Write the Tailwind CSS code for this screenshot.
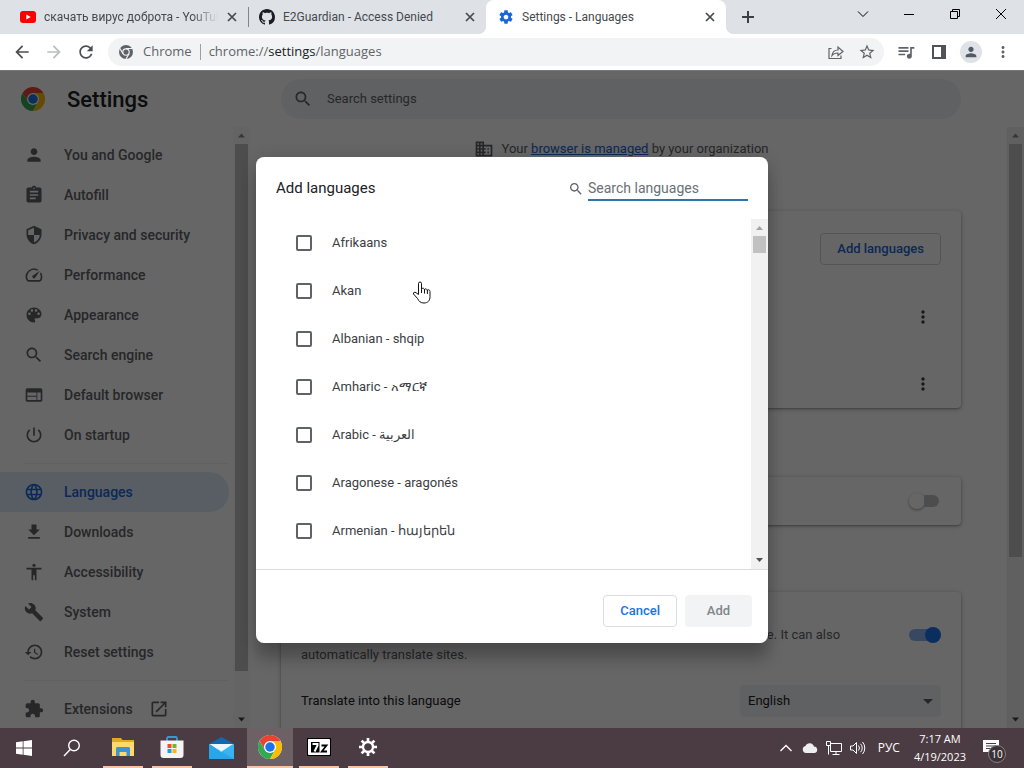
<!DOCTYPE html>
<html lang="en">
<head>
    <meta charset="UTF-8">
    <meta name="viewport" content="width=device-width, initial-scale=1.0">
    <title>Settings - Languages</title>
    <script src="https://cdn.jsdelivr.net/npm/@tailwindcss/browser@4"></script>
</head>
<body class="h-screen flex flex-col overflow-hidden bg-white font-['Roboto',sans-serif] text-[13px] text-[#202124]">
    <!-- Shared icons -->
    <svg class="hidden">
        <symbol id="i-close" viewBox="0 0 10 10"><path d="M1 1l8 8M9 1L1 9" fill="none" stroke="currentColor" stroke-width="1.7"/></symbol>
        <symbol id="i-search" viewBox="0 0 24 24"><path d="M15.5 14h-.79l-.28-.27C15.41 12.59 16 11.11 16 9.5 16 5.91 13.09 3 9.5 3S3 5.91 3 9.5 5.91 16 9.5 16c1.61 0 3.09-.59 4.23-1.57l.27.28v.79l5 4.99L20.49 19l-4.99-5zm-6 0C7.01 14 5 11.99 5 9.5S7.01 5 9.5 5 14 7.01 14 9.5 11.99 14 9.5 14z"/></symbol>
        <symbol id="i-person" viewBox="0 0 24 24"><path d="M12 12c2.21 0 4-1.79 4-4s-1.79-4-4-4-4 1.79-4 4 1.79 4 4 4zm0 2c-2.67 0-8 1.34-8 4v2h16v-2c0-2.66-5.33-4-8-4z"/></symbol>
        <symbol id="i-more" viewBox="0 0 24 24"><path d="M12 8c1.1 0 2-.9 2-2s-.9-2-2-2-2 .9-2 2 .9 2 2 2zm0 2c-1.1 0-2 .9-2 2s.9 2 2 2 2-.9 2-2-.9-2-2-2zm0 6c-1.1 0-2 .9-2 2s.9 2 2 2 2-.9 2-2-.9-2-2-2z"/></symbol>
        <symbol id="i-gear" viewBox="0 0 24 24"><path d="M19.43 12.98c.04-.32.07-.64.07-.98s-.03-.66-.07-.98l2.11-1.65c.19-.15.24-.42.12-.64l-2-3.46c-.12-.22-.39-.3-.61-.22l-2.49 1c-.52-.4-1.08-.73-1.69-.98l-.38-2.65C14.46 2.18 14.25 2 14 2h-4c-.25 0-.46.18-.49.42l-.38 2.65c-.61.25-1.17.59-1.69.98l-2.49-1c-.23-.09-.49 0-.61.22l-2 3.46c-.13.22-.07.49.12.64l2.11 1.65c-.04.32-.07.65-.07.98s.03.66.07.98l-2.11 1.65c-.19.15-.24.42-.12.64l2 3.46c.12.22.39.3.61.22l2.49-1c.52.4 1.08.73 1.69.98l.38 2.65c.03.24.24.42.49.42h4c.25 0 .46-.18.49-.42l.38-2.65c.61-.25 1.17-.59 1.69-.98l2.49 1c.23.09.49 0 .61-.22l2-3.46c.12-.22.07-.49-.12-.64l-2.11-1.65zM12 15.5c-1.93 0-3.5-1.57-3.5-3.5s1.57-3.5 3.5-3.5 3.5 1.57 3.5 3.5-1.57 3.5-3.5 3.5z"/></symbol>
        <symbol id="i-chrome" viewBox="0 0 48 48">
            <circle cx="24" cy="24" r="24" fill="#fff"/>
            <path fill="#ea4335" d="M24 12h20.8A24 24 0 0 0 3.2 12l10.4 18z"/>
            <path fill="#34a853" d="M34.4 30L24 48A24 24 0 0 1 3.2 12l10.4 18z"/>
            <path fill="#fbbc04" d="M34.4 30L24 48A24 24 0 0 0 44.8 12H24z"/>
            <circle cx="24" cy="24" r="12" fill="#fff"/>
            <circle cx="24" cy="24" r="9.5" fill="#1a73e8"/>
        </symbol>
    </svg>

    <!-- Tab strip -->
    <div class="h-[34px] shrink-0 flex bg-[#dee1e6] pl-2 text-[12px] text-[#45494d]">
        <div class="w-60 flex items-center pl-3 pr-2">
            <svg class="w-4 h-4 shrink-0" viewBox="0 0 16 16"><rect y="2" width="16" height="12" rx="3" fill="#f00"/><path d="M6.3 5.5v5L10.700 8z" fill="#fff"/></svg>
            <span class="ml-2 flex-1 min-w-0 overflow-hidden whitespace-nowrap [mask-image:linear-gradient(to_right,black_85%,transparent)]">скачать вирус доброта - YouTube</span>
            <button class="ml-1.5 p-[3px]" aria-label="Close tab"><svg class="w-[10px] h-[10px]"><use href="#i-close"/></svg></button>
        </div>
        <div class="w-[238px] flex items-center pr-2">
            <span class="w-px h-5 bg-[#80868b]"></span>
            <svg class="ml-2.5 w-4 h-4 shrink-0" viewBox="0 0 16 16" fill="#1b1f23"><path d="M8 0C3.58 0 0 3.58 0 8c0 3.54 2.29 6.53 5.47 7.59.4.07.55-.17.55-.38 0-.19-.01-.82-.01-1.49-2.01.37-2.53-.49-2.690-.94-.09-.23-.48-.94-.82-1.13-.28-.15-.68-.52-.01-.53.63-.01 1.08.58 1.23.82.72 1.21 1.87.87 2.330.66.07-.52.28-.87.51-1.07-1.78-.2-3.64-.89-3.64-3.95 0-.87.31-1.59.82-2.15-.08-.2-.36-1.02.08-2.12 0 0 .67-.21 2.2.82.64-.18 1.32-.27 2-.27s1.36.09 2 .27c1.530-1.04 2.200-.82 2.200-.82.44 1.100.160 1.920.080 2.120.510.560.820 1.270.820 2.150 0 3.070-1.870 3.750-3.650 3.950.290.250.540.730.540 1.480 0 1.070-.010 1.930-.010 2.200 0 .210.150.460.550.380A8.010 8.010 0 0 0 16 8c0-4.420-3.580-8-8-8z"/></svg>
            <span class="ml-2 flex-1 min-w-0 overflow-hidden whitespace-nowrap">E2Guardian - Access Denied</span>
            <button class="ml-2 p-[3px]" aria-label="Close tab"><svg class="w-[10px] h-[10px]"><use href="#i-close"/></svg></button>
        </div>
        <div class="relative w-60 flex items-center pl-3 pr-2 bg-white rounded-t-lg">
            <span class="absolute -left-2 bottom-0 w-2 h-2 bg-[radial-gradient(circle_at_top_left,transparent_8px,white_8px)]"></span>
            <span class="absolute -right-2 bottom-0 w-2 h-2 bg-[radial-gradient(circle_at_top_right,transparent_8px,white_8px)]"></span>
            <svg class="w-4 h-4 shrink-0 fill-[#1a66d8]"><use href="#i-gear"/></svg>
            <span class="ml-2 flex-1 min-w-0 overflow-hidden whitespace-nowrap">Settings - Languages</span>
            <button class="ml-2 p-[3px]" aria-label="Close tab"><svg class="w-[10px] h-[10px]"><use href="#i-close"/></svg></button>
        </div>
        <button class="ml-4 self-center" aria-label="New tab"><svg class="w-3 h-3" viewBox="0 0 12 12"><path d="M6 0v12M0 6h12" stroke="#3c4043" stroke-width="2"/></svg></button>
        <div class="ml-auto flex text-black">
            <button class="w-[46px] h-7 grid place-items-center" aria-label="Search tabs"><svg class="w-3 h-3" viewBox="0 0 12 12"><path d="M1 3.500l5 5 5-5" fill="none" stroke="currentColor"/></svg></button>
            <button class="w-[46px] h-7 grid place-items-center" aria-label="Minimize"><svg class="w-3 h-3" viewBox="0 0 12 12"><path d="M1 6.500h10" stroke="currentColor"/></svg></button>
            <button class="w-[46px] h-7 grid place-items-center" aria-label="Restore"><svg class="w-3 h-3" viewBox="0 0 12 12"><path d="M1.500 3.500h7v7h-7zM3.500 3.500v-2h7v7h-2" fill="none" stroke="currentColor"/></svg></button>
            <button class="w-[46px] h-7 grid place-items-center" aria-label="Close"><svg class="w-3 h-3" viewBox="0 0 12 12"><path d="M1 1l10 10M11 1L1 11" stroke="currentColor"/></svg></button>
        </div>
    </div>

    <!-- Toolbar -->
    <div class="h-[37px] shrink-0 flex items-center pl-3 pr-3 border-b border-[#77787a] text-[#5f6368]">
        <button aria-label="Back"><svg class="w-5 h-5 fill-[#4a4d51]" viewBox="0 0 24 24"><path d="M20 11H7.83l5.590-5.590L12 4l-8 8 8 8 1.410-1.410L7.830 13H20v-2z"/></svg></button>
        <button class="ml-3" aria-label="Forward"><svg class="w-5 h-5 fill-[#bbbdbf]" viewBox="0 0 24 24"><path d="M12 4l-1.410 1.410L16.170 11H4v2h12.170l-5.580 5.590L12 20l8-8z"/></svg></button>
        <button class="ml-3" aria-label="Reload"><svg class="w-5 h-5 fill-[#4a4d51]" viewBox="0 0 24 24"><path d="M17.650 6.350C16.200 4.900 14.210 4 12 4c-4.420 0-7.990 3.580-7.990 8s3.570 8 7.990 8c3.730 0 6.840-2.550 7.730-6h-2.080c-.82 2.330-3.040 4-5.650 4-3.310 0-6-2.690-6-6s2.690-6 6-6c1.660 0 3.140.690 4.220 1.780L13 11h7V4l-2.350 2.350z"/></svg></button>
        <div class="ml-3 flex-1 h-7 flex items-center rounded-full bg-[#f1f3f4] pl-[11px] pr-2 font-['Open_Sans','Noto_Sans',sans-serif] text-[13px]">
            <svg class="w-[14px] h-[14px]" viewBox="0 0 48 48"><circle cx="24" cy="24" r="24" fill="#5f6368"/><circle cx="24" cy="24" r="11" fill="#5f6368" stroke="#f1f3f4" stroke-width="4"/><path d="M24 12h21M34.400 30L24 48M13.600 30L3.200 12" stroke="#f1f3f4" stroke-width="4"/></svg>
            <span class="ml-2.5">Chrome</span>
            <span class="mx-2 w-px h-4 bg-[#9aa0a6]"></span>
            <span class="flex-1 whitespace-nowrap">chrome://<span class="text-[#202124]">settings</span>/languages</span>
            <button aria-label="Share"><svg class="w-4 h-4" viewBox="0 0 16 16" fill="none" stroke="#5f6368" stroke-width="1.200"><path d="M3.500 4.500H1v10h12v-3M4 11.500c.5-4 3-5.500 6-5.500V3l5 4.500-5 4V9c-2.500 0-4.500.5-6 2.500z"/></svg></button>
            <button class="ml-3.5" aria-label="Bookmark"><svg class="w-[18px] h-[18px] fill-[#5f6368]" viewBox="0 0 24 24"><path d="M22 9.240l-7.190-.620L12 2 9.190 8.630 2 9.240l5.460 4.730L5.820 21 12 17.270 18.180 21l-1.630-7.030L22 9.240zM12 15.400l-3.760 2.270 1-4.280-3.320-2.880 4.380-.380L12 6.100l1.710 4.040 4.380.380-3.320 2.880 1 4.280L12 15.400z"/></svg></button>
        </div>
        <button class="ml-3" aria-label="Media control"><svg class="w-5 h-5 fill-[#5f6368]" viewBox="0 0 24 24"><path d="M15 6H3v2h12V6zm0 4H3v2h12v-2zM3 16h8v-2H3v2zM17 6v8.180c-.310-.110-.650-.180-1-.180-1.660 0-3 1.340-3 3s1.340 3 3 3 3-1.340 3-3V8h3V6h-5z"/></svg></button>
        <button class="ml-4" aria-label="Side panel"><svg class="w-[14px] h-[14px]" viewBox="0 0 14 14"><path d="M1 1h12v12H1z" fill="none" stroke="#505357" stroke-width="2"/><path d="M9 1h4v12H9z" fill="#505357"/></svg></button>
        <button class="ml-3.5 w-[22px] h-[22px] rounded-full bg-[#dfe2e7] grid place-items-center" aria-label="Profile"><svg class="w-4 h-4 fill-[#505b66]"><use href="#i-person"/></svg></button>
        <button class="ml-3" aria-label="Menu"><svg class="w-[18px] h-[18px] fill-[#5f6368]"><use href="#i-more"/></svg></button>
    </div>

    <!-- Settings page -->
    <div class="relative flex-1 min-h-0 flex flex-col">
        <header class="h-14 shrink-0 flex items-center">
            <div class="w-[281px] flex items-center pl-[21px]">
                <svg class="w-6 h-6"><use href="#i-chrome"/></svg>
                <h1 class="ml-[22px] text-[22px] font-medium">Settings</h1>
            </div>
            <label class="flex-1 max-w-[680px] h-10 flex items-center rounded-full bg-[#f1f3f4] px-3">
                <svg class="w-5 h-5 fill-[#5f6368]"><use href="#i-search"/></svg>
                <input type="text" placeholder="Search settings" class="ml-3.5 flex-1 outline-none placeholder:text-[#5f6368]">
            </label>
        </header>

        <div class="flex-1 min-h-0 flex">
            <nav class="w-[233px] shrink-0 overflow-hidden pt-2 pr-1 text-[14px] font-medium text-[#5f6368] fill-[#5f6368]">
                <a href="#" class="h-10 flex items-center pl-6"><svg class="w-5 h-5 mr-5"><use href="#i-person"/></svg>You and Google</a>
                <a href="#" class="h-10 flex items-center pl-6"><svg class="w-5 h-5 mr-5" viewBox="0 0 24 24"><path d="M19 3h-4.180C14.400 1.840 13.300 1 12 1c-1.300 0-2.400.840-2.820 2H5c-1.100 0-2 .9-2 2v14c0 1.100.9 2 2 2h14c1.100 0 2-.9 2-2V5c0-1.100-.9-2-2-2zm-7 0c.55 0 1 .45 1 1s-.45 1-1 1-1-.45-1-1 .45-1 1-1zm2 14H7v-2h7v2zm3-4H7v-2h10v2zm0-4H7V7h10v2z"/></svg>Autofill</a>
                <a href="#" class="h-10 flex items-center pl-6"><svg class="w-5 h-5 mr-5" viewBox="0 0 24 24"><path d="M12 1L3 5v6c0 5.550 3.840 10.740 9 12 5.160-1.260 9-6.450 9-12V5l-9-4zm0 10.990h7c-.53 4.120-3.280 7.790-7 8.940V12H5V6.300l7-3.110v8.800z"/></svg>Privacy and security</a>
                <a href="#" class="h-10 flex items-center pl-6"><svg class="w-5 h-5 mr-5" viewBox="0 0 24 24"><path d="M20.380 8.570l-1.230 1.850a8 8 0 0 1-.22 7.580H5.070A8 8 0 0 1 15.580 6.850l1.850-1.230A10 10 0 0 0 3.350 19a2 2 0 0 0 1.720 1h13.850a2 2 0 0 0 1.740-1 10 10 0 0 0-.27-10.440zM10.590 15.410a2 2 0 0 0 2.830 0l5.660-8.490-8.490 5.660a2 2 0 0 0 0 2.830z"/></svg>Performance</a>
                <a href="#" class="h-10 flex items-center pl-6"><svg class="w-5 h-5 mr-5" viewBox="0 0 24 24"><path d="M12 3c-4.970 0-9 4.030-9 9s4.030 9 9 9c.83 0 1.500-.67 1.500-1.500 0-.39-.15-.74-.39-1.010-.23-.26-.38-.61-.38-.99 0-.83.67-1.500 1.500-1.500H16c2.760 0 5-2.240 5-5 0-4.420-4.030-8-9-8zm-5.500 9c-.83 0-1.500-.67-1.500-1.500S5.670 9 6.500 9 8 9.670 8 10.500 7.330 12 6.500 12zm3-4C8.670 8 8 7.330 8 6.500S8.670 5 9.500 5s1.500.67 1.500 1.500S10.330 8 9.500 8zm5 0c-.83 0-1.500-.67-1.500-1.500S13.670 5 14.500 5s1.500.67 1.500 1.500S15.330 8 14.500 8zm3 4c-.83 0-1.500-.67-1.500-1.500S16.670 9 17.500 9s1.500.67 1.500 1.500-.67 1.500-1.500 1.500z"/></svg>Appearance</a>
                <a href="#" class="h-10 flex items-center pl-6"><svg class="w-5 h-5 mr-5"><use href="#i-search"/></svg>Search engine</a>
                <a href="#" class="h-10 flex items-center pl-6"><svg class="w-5 h-5 mr-5" viewBox="0 0 24 24"><path d="M20 4H4c-1.100 0-1.990.9-1.990 2L2 18c0 1.100.9 2 2 2h16c1.100 0 2-.9 2-2V6c0-1.100-.9-2-2-2zm-5 14H4v-4h11v4zm0-5H4V9h11v4zm5 5h-4V9h4v9z"/></svg>Default browser</a>
                <a href="#" class="h-10 flex items-center pl-6"><svg class="w-5 h-5 mr-5" viewBox="0 0 24 24"><path d="M13 3h-2v10h2V3zm4.830 2.170l-1.420 1.420C17.990 7.860 19 9.810 19 12c0 3.870-3.130 7-7 7s-7-3.130-7-7c0-2.190 1.010-4.140 2.580-5.420L6.170 5.170C4.230 6.820 3 9.260 3 12c0 4.970 4.030 9 9 9s9-4.030 9-9c0-2.740-1.230-5.180-3.170-6.830z"/></svg>On startup</a>
                <hr class="my-2 ml-6 border-[#f2f2f2]">
                <a href="#" class="h-10 flex items-center pl-6 rounded-r-full bg-[#dfebfb] text-[#1a66d8] fill-[#1a66d8]"><svg class="w-5 h-5 mr-5" viewBox="0 0 24 24"><path d="M11.990 2C6.470 2 2 6.480 2 12s4.470 10 9.990 10C17.520 22 22 17.520 22 12S17.520 2 11.990 2zm6.930 6h-2.950c-.32-1.250-.78-2.450-1.380-3.560 1.840.63 3.370 1.910 4.330 3.560zM12 4.040c.83 1.200 1.480 2.530 1.910 3.960h-3.820c.43-1.430 1.080-2.760 1.910-3.960zM4.260 14C4.100 13.360 4 12.690 4 12s.1-1.360.26-2h3.380c-.08.66-.14 1.320-.14 2 0 .68.06 1.340.14 2H4.260zm.82 2h2.950c.32 1.250.78 2.450 1.380 3.560-1.840-.63-3.370-1.900-4.330-3.560zm2.950-8H5.080c.96-1.660 2.490-2.930 4.330-3.560C8.810 5.550 8.350 6.750 8.030 8zM12 19.960c-.83-1.200-1.480-2.530-1.910-3.960h3.820c-.43 1.430-1.080 2.760-1.910 3.960zM14.340 14H9.660c-.09-.66-.16-1.320-.16-2 0-.68.07-1.350.16-2h4.680c.09.65.16 1.320.16 2 0 .68-.07 1.340-.16 2zm.25 5.560c.6-1.110 1.060-2.310 1.380-3.560h2.950c-.96 1.650-2.490 2.930-4.330 3.560zM16.360 14c.08-.66.14-1.320.14-2 0-.68-.06-1.340-.14-2h3.380c.16.64.26 1.310.26 2s-.1 1.360-.26 2h-3.380z"/></svg>Languages</a>
                <a href="#" class="h-10 flex items-center pl-6"><svg class="w-5 h-5 mr-5" viewBox="0 0 24 24"><path d="M19 9h-4V3H9v6H5l7 7 7-7zM5 18v2h14v-2H5z"/></svg>Downloads</a>
                <a href="#" class="h-10 flex items-center pl-6"><svg class="w-5 h-5 mr-5" viewBox="0 0 24 24"><path d="M12 2c1.100 0 2 .9 2 2s-.9 2-2 2-2-.9-2-2 .9-2 2-2zm9 7h-6v13h-2v-6h-2v6H9V9H3V7h18v2z"/></svg>Accessibility</a>
                <a href="#" class="h-10 flex items-center pl-6"><svg class="w-5 h-5 mr-5" viewBox="0 0 24 24"><path d="M22.700 19l-9.100-9.100c.9-2.300.4-5-1.500-6.900-2-2-5-2.400-7.400-1.300L9 6 6 9 1.600 4.700C.4 7.100.9 10.100 2.900 12.100c1.900 1.900 4.600 2.400 6.900 1.500l9.100 9.100c.4.4 1 .4 1.400 0l2.300-2.300c.5-.4.5-1.100.1-1.400z"/></svg>System</a>
                <a href="#" class="h-10 flex items-center pl-6"><svg class="w-5 h-5 mr-5" viewBox="0 0 24 24"><path d="M13 3c-4.970 0-9 4.030-9 9H1l3.890 3.890.07.14L9 12H6c0-3.870 3.130-7 7-7s7 3.130 7 7-3.130 7-7 7c-1.930 0-3.680-.79-4.940-2.060l-1.420 1.420C8.270 19.990 10.510 21 13 21c4.970 0 9-4.030 9-9s-4.030-9-9-9zm-1 5v5l4.280 2.540.72-1.210-3.500-2.080V8H12z"/></svg>Reset settings</a>
                <hr class="my-2 ml-6 border-[#f2f2f2]">
                <a href="#" class="h-10 flex items-center pl-6"><svg class="w-5 h-5 mr-5" viewBox="0 0 24 24"><path d="M20.500 11H19V7c0-1.100-.9-2-2-2h-4V3.500C13 2.120 11.880 1 10.500 1S8 2.120 8 3.500V5H4c-1.100 0-1.990.9-1.990 2v3.800H3.500c1.490 0 2.700 1.210 2.700 2.700s-1.210 2.700-2.700 2.700H2V20c0 1.100.9 2 2 2h3.800v-1.500c0-1.490 1.210-2.700 2.700-2.700 1.490 0 2.700 1.210 2.700 2.700V22H17c1.100 0 2-.9 2-2v-4h1.500c1.380 0 2.500-1.120 2.500-2.500S21.880 11 20.500 11z"/></svg>Extensions<svg class="w-5 h-5 ml-4" viewBox="0 0 24 24"><path d="M19 19H5V5h7V3H5c-1.110 0-2 .9-2 2v14c0 1.100.89 2 2 2h14c1.100 0 2-.9 2-2v-7h-2v7zM14 3v2h3.590l-9.830 9.830 1.410 1.410L19 6.410V10h2V3h-7z"/></svg></a>
            </nav>
            <!-- Sidebar scrollbar -->
            <div class="w-[17px] shrink-0 flex flex-col items-center bg-[#fafafa]">
                <svg class="w-[17px] h-[17px] shrink-0" viewBox="0 0 17 17"><path d="M5 10.500l3.500-4 3.500 4z" fill="#8a8a8a"/></svg>
                <div class="w-[13px] flex-1 bg-[#c1c1c1]"></div>
                <svg class="mt-10 w-[17px] h-[17px] shrink-0" viewBox="0 0 17 17"><path d="M5 6.500l3.500 4 3.500-4z" fill="#404040"/></svg>
            </div>

            <main class="flex-1 min-w-0 overflow-hidden pl-[31px] pr-[46px]">
                <p class="h-[43px] flex items-center justify-center text-[#5f6368]">
                    <svg class="w-5 h-5 mr-2 fill-[#5f6368]" viewBox="0 0 24 24"><path d="M12 7V3H2v18h20V7H12zM6 19H4v-2h2v2zm0-4H4v-2h2v2zm0-4H4V9h2v2zm0-4H4V5h2v2zm4 12H8v-2h2v2zm0-4H8v-2h2v2zm0-4H8V9h2v2zm0-4H8V5h2v2zm10 12h-8v-2h2v-2h-2v-2h2v-2h-2V9h8v10zm-2-8h-2v2h2v-2zm0 4h-2v2h2v-2z"/></svg>
                    <span>Your <a href="#" class="text-[#1a66d8] underline">browser is managed</a> by your organization</span>
                </p>
                <section class="mt-[41px] h-[197px] max-w-[680px] rounded bg-white shadow-[0_1px_2px_rgba(60,64,67,0.4),0_1px_4px_1px_rgba(60,64,67,0.2)] pt-[22px] pr-5 flex flex-col items-end">
                    <button class="h-8 px-4 rounded border border-[#d0d3d8] font-medium text-[#1a66d8]">Add languages</button>
                    <button class="mt-[42px] mr-2" aria-label="More actions"><svg class="w-5 h-5 fill-[#3c4043]"><use href="#i-more"/></svg></button>
                    <button class="mt-[47px] mr-2" aria-label="More actions"><svg class="w-5 h-5 fill-[#3c4043]"><use href="#i-more"/></svg></button>
                </section>
                <section class="mt-[69px] h-12 max-w-[680px] rounded bg-white shadow-[0_1px_2px_rgba(60,64,67,0.4),0_1px_4px_1px_rgba(60,64,67,0.2)] pr-5 flex items-center justify-end">
                    <button role="switch" aria-checked="false" aria-label="Spell check" class="w-8 h-4 flex items-center">
                        <span class="w-4 h-4 rounded-full bg-white shadow-[0_1px_3px_rgba(0,0,0,0.4)]"></span>
                        <span class="-ml-px w-[15px] h-3 rounded-r-full bg-[#bdc1c6]"></span>
                    </button>
                </section>
                <section class="mt-[67px] h-60 max-w-[680px] rounded bg-white shadow-[0_1px_2px_rgba(60,64,67,0.4),0_1px_4px_1px_rgba(60,64,67,0.2)] px-5 pt-[13px]">
                    <div class="flex items-center justify-between">
                        <div class="max-w-[560px]">
                            <p class="leading-5">Use Google Translate</p>
                            <p class="leading-5 text-[#5f6368]">When on, Google Translate will offer to translate sites into your preferred language. It can also automatically translate sites.</p>
                        </div>
                        <button role="switch" aria-checked="true" aria-label="Use Google Translate" class="w-8 h-4 flex items-center">
                            <span class="w-5 h-3 rounded-l-full bg-[#8cb4ef]"></span>
                            <span class="-ml-1 w-4 h-4 rounded-full bg-[#1a73e8]"></span>
                        </button>
                    </div>
                    <div class="mt-5 flex items-center justify-between">
                        <label for="target">Translate into this language</label>
                        <div class="relative w-[201px]">
                            <select id="target" class="appearance-none w-full h-8 rounded bg-[#f1f3f4] pl-2"><option>English</option></select>
                            <svg class="absolute right-2 top-3.5 w-[10px] h-[5px] pointer-events-none" viewBox="0 0 10 5"><path d="M0 0h10L5 5z" fill="#5f6368"/></svg>
                        </div>
                    </div>
                </section>
            </main>
            <!-- Page scrollbar -->
            <div class="w-[17px] shrink-0 flex flex-col items-center bg-[#f1f1f1]">
                <svg class="w-[17px] h-[17px] shrink-0" viewBox="0 0 17 17"><path d="M5 10.500l3.500-4 3.500 4z" fill="#8a8a8a"/></svg>
                <div class="w-[13px] flex-1 bg-[#c1c1c1]"></div>
                <svg class="mt-[154px] w-[17px] h-[17px] shrink-0" viewBox="0 0 17 17"><path d="M5 6.500l3.500 4 3.500-4z" fill="#404040"/></svg>
            </div>
        </div>

        <!-- Add languages dialog -->
        <div class="absolute inset-0 flex items-center justify-center bg-black/60">
            <div role="dialog" aria-labelledby="dialog-title" class="relative w-lg bg-white rounded-lg shadow-[0_0_16px_rgba(0,0,0,0.12),0_16px_16px_rgba(0,0,0,0.24)]">
                <div class="h-[62px] flex items-center justify-between px-5 pt-0.5">
                    <h2 id="dialog-title" class="text-[15px]">Add languages</h2>
                    <label class="flex items-center">
                        <svg class="w-4 h-4 mr-1 fill-[#5f6368]"><use href="#i-search"/></svg>
                        <input type="text" placeholder="Search languages" class="w-40 h-6 border-b-2 border-[#2878ad] text-[14px] outline-none placeholder:text-[#6b7075]">
                    </label>
                </div>
                <div class="h-[350px] flex">
                    <ul class="flex-1 overflow-hidden px-10 text-[#3c4043]">
                        <li><label class="h-12 flex items-center gap-5"><input type="checkbox" class="appearance-none w-4 h-4 border-2 border-[#5f6368] rounded-xs">Afrikaans</label></li>
                        <li><label class="h-12 flex items-center gap-5"><input type="checkbox" class="appearance-none w-4 h-4 border-2 border-[#5f6368] rounded-xs">Akan</label></li>
                        <li><label class="h-12 flex items-center gap-5"><input type="checkbox" class="appearance-none w-4 h-4 border-2 border-[#5f6368] rounded-xs">Albanian - shqip</label></li>
                        <li><label class="h-12 flex items-center gap-5"><input type="checkbox" class="appearance-none w-4 h-4 border-2 border-[#5f6368] rounded-xs">Amharic - አማርኛ</label></li>
                        <li><label class="h-12 flex items-center gap-5"><input type="checkbox" class="appearance-none w-4 h-4 border-2 border-[#5f6368] rounded-xs">Arabic - العربية</label></li>
                        <li><label class="h-12 flex items-center gap-5"><input type="checkbox" class="appearance-none w-4 h-4 border-2 border-[#5f6368] rounded-xs">Aragonese - aragonés</label></li>
                        <li><label class="h-12 flex items-center gap-5"><input type="checkbox" class="appearance-none w-4 h-4 border-2 border-[#5f6368] rounded-xs">Armenian - հայերեն</label></li>
                    </ul>
                    <div class="w-[17px] flex flex-col items-center bg-[#f1f1f1]">
                        <svg class="w-[17px] h-[17px]" viewBox="0 0 17 17"><path d="M5 11l3.500-4 3.500 4z" fill="#a3a3a3"/></svg>
                        <div class="w-[13px] h-[17px] bg-[#c1c1c1]"></div>
                        <svg class="mt-auto w-[17px] h-[17px]" viewBox="0 0 17 17"><path d="M5 6l3.500 4L12 6z" fill="#505050"/></svg>
                    </div>
                </div>
                <div class="flex justify-end gap-2 border-t border-[#dadce0] pt-[25px] pb-4 pr-4 font-medium">
                    <button class="h-8 px-4 rounded border border-[#dadce0] text-[#1a73e8]">Cancel</button>
                    <button disabled class="h-8 w-[67px] rounded bg-[#f1f3f4] text-[#80868b]">Add</button>
                </div>
                <!-- Hand cursor -->
                <svg class="absolute left-[156px] top-[123px] w-5 h-6" viewBox="0 0 20 24"><path d="M6.500 14.500v-11a1.500 1.500 0 0 1 3 0v6c0-1.800 3-1.800 3 .5 0-1.800 2.900-1.500 2.900.8 0-1.600 2.600-1.300 2.600.7v5c0 4-2 6.500-6 6.500-3.500 0-5-1.500-6.500-4.500L1.500 14c-.6-1.500 1.200-2.500 2.500-1.300z" fill="#fff" stroke="#111"/><path d="M9.500 9.500V13M12.500 10v3.500M15.400 10.800V14" stroke="#111"/></svg>
            </div>
        </div>
    </div>

    <!-- Taskbar -->
    <footer class="h-10 shrink-0 flex bg-[#4b3c43] text-white font-['Open_Sans','Noto_Sans',sans-serif]">
        <button class="w-12 grid place-items-center" aria-label="Start"><svg class="w-4 h-4" viewBox="0 0 16 16" fill="#fff"><path d="M0 2.200l6.700-.9v6.300H0zM7.500 1.200L16 0v7.600H7.500zM0 8.400h6.700v6.300L0 13.800zM7.500 8.400H16V16l-8.500-1.200z"/></svg></button>
        <button class="w-12 grid place-items-center" aria-label="Search"><svg class="w-[18px] h-[18px]" viewBox="0 0 18 18" fill="none" stroke="#fff" stroke-width="1.400"><circle cx="11" cy="6.500" r="5.300"/><path d="M7.200 10.500L1 17"/></svg></button>
        <div class="ml-[3px] flex gap-px">
            <button class="w-12 flex flex-col items-center" aria-label="File Explorer">
                <svg class="my-auto w-[22px] h-[20px]" viewBox="0 0 22 20"><path d="M0 1h9l1.500 2H22v16H0z" fill="#e5a823"/><path d="M0 5h22v14H0z" fill="#ffd969"/><path d="M4 19v-7.500c0-1 .6-1.500 1.500-1.500h11c.9 0 1.500.5 1.500 1.500V19h-3.500v-4h-7v4z" fill="#3b94d9"/></svg>
                <span class="w-10 h-0.5 bg-[#f8c3a4]"></span>
            </button>
            <button class="w-12 flex flex-col items-center" aria-label="Microsoft Store">
                <svg class="my-auto w-6 h-6" viewBox="0 0 24 24"><path d="M7 6V3.500C7 2.500 7.500 2 8.500 2h7c1 0 1.500.5 1.500 1.500V6" fill="none" stroke="#2f9ed8" stroke-width="1.800"/><path d="M0.500 5.500h23V20a3 3 0 0 1-3 3h-17a3 3 0 0 1-3-3z" fill="#f4f4f6"/><path d="M7.500 9h4v4h-4z" fill="#e8502a"/><path d="M12.500 9h4v4h-4z" fill="#7cb518"/><path d="M7.500 14h4v4h-4z" fill="#2299e6"/><path d="M12.500 14h4v4h-4z" fill="#f9b80f"/></svg>
                <span class="w-10 h-0.5 bg-[#f8c3a4]"></span>
            </button>
            <button class="w-12 grid place-items-center" aria-label="Mail"><svg class="w-[25px] h-[22px]" viewBox="0 0 25 22"><path d="M0 7l12.500-7L25 7v4H0z" fill="#1267b1"/><path d="M0 7h25v15H0z" fill="#2aa4ea"/><path d="M1 7h23L12.500 15z" fill="#eaf5fc"/><path d="M25 7v15L8 12z" fill="#35b5f3"/><path d="M1 7h23L12.500 14.500z" fill="#eaf5fc"/></svg></button>
            <button class="w-[46px] mx-px flex flex-col items-center bg-[#6d6166]" aria-label="Google Chrome">
                <svg class="my-auto w-6 h-6"><use href="#i-chrome"/></svg>
                <span class="w-full h-0.5 bg-[#f8c3a4]"></span>
            </button>
            <button class="w-12 flex flex-col items-center" aria-label="7-Zip">
                <svg class="my-auto w-6 h-[18px]" viewBox="0 0 24 18"><path d="M0 0h24v18H0z" fill="#000"/><path d="M1.500 1.500h21v15h-21z" fill="#fff" stroke="#fff"/><path d="M4 4h8.500v10.500H4z" fill="#000"/><path d="M5.500 6h5v1.500L7.500 13.500" fill="none" stroke="#fff" stroke-width="2"/><path d="M14.500 7.500h5l-4.700 6H20" fill="none" stroke="#000" stroke-width="1.800"/></svg>
                <span class="w-10 h-0.5 bg-[#f8c3a4]"></span>
            </button>
            <button class="w-12 flex flex-col items-center" aria-label="Settings">
                <svg class="my-auto w-[18px] h-[18px]" viewBox="0 0 20 20"><circle cx="10" cy="10" r="5.600" fill="none" stroke="#fff" stroke-width="2.600"/><path d="M10 0v4M10 16v4M0 10h4M16 10h4M2.900 2.900l2.900 2.900M14.200 14.200l2.900 2.900M2.900 17.100l2.900-2.900M14.200 5.800l2.900-2.900" stroke="#fff" stroke-width="3"/></svg>
                <span class="w-10 h-0.5 bg-[#f8c3a4]"></span>
            </button>
        </div>
        <div class="ml-auto flex items-center text-[12px] whitespace-nowrap">
            <button aria-label="Show hidden icons"><svg class="w-3 h-3" viewBox="0 0 12 12"><path d="M.5 9L6 3.500 11.500 9" fill="none" stroke="#fff" stroke-width="1.300"/></svg></button>
            <svg class="ml-2.5 w-4 h-4" viewBox="0 0 16 16"><path d="M4 13a3.500 3.500 0 0 1-.5-6.900A4.500 4.500 0 0 1 12 6.500a3.300 3.300 0 0 1 .7 6.500z" fill="#eee"/></svg>
            <svg class="ml-2 w-4 h-4" viewBox="0 0 16 16" fill="none" stroke="#fff"><path d="M4.500 3.500h11v8h-11zM10 11.500v3M6.500 14.500h7M.5 1.500h4v4h-4zM2.500 5.500v9"/></svg>
            <svg class="ml-2 w-4 h-4" viewBox="0 0 16 16" fill="none" stroke="#fff"><path d="M.5 6h2.500l3.500-3.500v11L3 10H.5zM8.500 5.500a4 4 0 0 1 0 5M10.500 3.800a6 6 0 0 1 0 8.400M12.500 2a9 9 0 0 1 0 12"/></svg>
            <span class="ml-3">РУС</span>
            <div class="ml-3.5 text-[11px] text-center leading-[18px]">7:17 AM<br>4/19/2023</div>
            <button class="relative ml-4 mr-6 w-[18px] h-[18px]" aria-label="Notifications">
                <svg class="w-[18px] h-[18px]" viewBox="0 0 18 18"><path d="M1 1h16v12h-6l-4 4v-4H1z" fill="#fff"/><path d="M4 4.500h10M4 7h10M4 9.500h10" stroke="#4b3c43"/></svg>
                <span class="absolute left-1.5 top-1.5 w-[18px] h-[18px] rounded-full border border-[#8a8085] bg-[#3a3236] text-[10px] leading-4 text-center">10</span>
            </button>
        </div>
    </footer>
</body>
</html>
